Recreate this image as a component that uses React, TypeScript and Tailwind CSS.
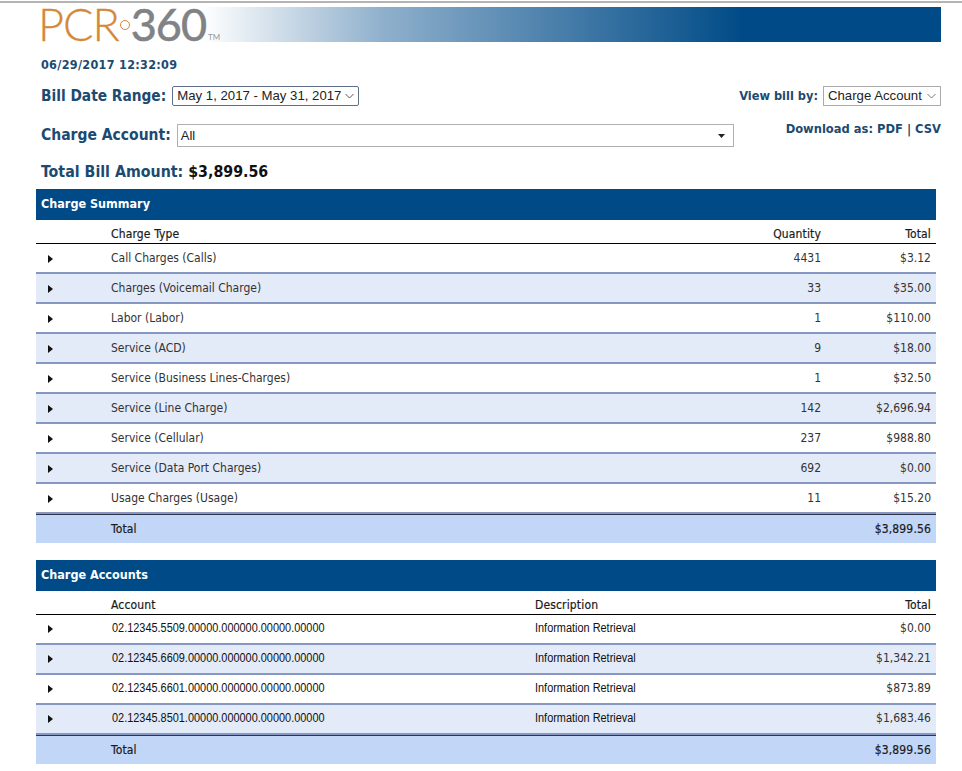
const font = "font-['DejaVu_Sans_Condensed','DejaVu_Sans',sans-serif]";
const arial = "font-['Liberation_Sans',Arial,sans-serif]";

type SummaryRow = { type: string; qty: string; total: string };
type AccountRow = { account: string; total: string };

const summary: SummaryRow[] = [
  { type: "Call Charges (Calls)", qty: "4431", total: "$3.12" },
  { type: "Charges (Voicemail Charge)", qty: "33", total: "$35.00" },
  { type: "Labor (Labor)", qty: "1", total: "$110.00" },
  { type: "Service (ACD)", qty: "9", total: "$18.00" },
  { type: "Service (Business Lines-Charges)", qty: "1", total: "$32.50" },
  { type: "Service (Line Charge)", qty: "142", total: "$2,696.94" },
  { type: "Service (Cellular)", qty: "237", total: "$988.80" },
  { type: "Service (Data Port Charges)", qty: "692", total: "$0.00" },
  { type: "Usage Charges (Usage)", qty: "11", total: "$15.20" },
];

const accounts: AccountRow[] = [
  { account: "02.12345.5509.00000.000000.00000.00000", total: "$0.00" },
  { account: "02.12345.6609.00000.000000.00000.00000", total: "$1,342.21" },
  { account: "02.12345.6601.00000.000000.00000.00000", total: "$873.89" },
  { account: "02.12345.8501.00000.000000.00000.00000", total: "$1,683.46" },
];

const summaryCols = "grid grid-cols-[75px_1fr_110px_115px] items-center";
const accountCols = "grid grid-cols-[75px_424px_1fr_115px] items-center";
const heading = "text-[#1a1a1a] tracking-[0.15px] [-webkit-text-stroke:0.2px_#1a1a1a]";

function Arrow() {
  return (
    <svg width="5" height="8" viewBox="0 0 5 8" className="ml-[12px] mt-[2px]">
      <path d="M0 0 L5 4 L0 8 Z" fill="#111" />
    </svg>
  );
}

function Chevron({ color = "#555" }: { color?: string }) {
  return (
    <svg width="9" height="6" viewBox="0 0 9 6" fill="none">
      <path d="M0.5 1 L4.5 5 L8.5 1" stroke={color} strokeWidth="1" />
    </svg>
  );
}

function SectionBar({ title }: { title: string }) {
  return (
    <div className={`h-[31px] bg-[#004b87] pl-[5px] flex items-center text-white text-[12.5px] font-bold ${font}`}>
      {title}
    </div>
  );
}

function rowBg(i: number) {
  return i % 2 === 1 ? "bg-[#e3eaf8]" : "bg-white";
}

export default function App() {
  return (
    <div className={`w-[962px] h-[771px] overflow-hidden bg-white ${font}`}>
      <div className="h-[3px] bg-white border-b-2 border-[#b4b4b4]" />

      <div className="ml-[40px] mr-[21px] mt-[4px] h-[35px] flex bg-[linear-gradient(90deg,#ffffff_18%,#8fb0cc_38%,#004b87_78%)]">
        <div className="flex items-center h-[35px] -ml-[2px] font-['Lato',sans-serif] leading-[35px]">
          <span className="text-[45px] font-light text-[#d4883a] tracking-[-1px] [-webkit-text-stroke:0.3px_#d4883a]">PCR</span>
          <span className="w-[10px] h-[10px] mx-[1px] rounded-full border-[1.5px] border-[#d4883a]" />
          <span className="text-[45px] text-[#808285] tracking-[-1px] [-webkit-text-stroke:0.6px_#808285]">360</span>
          <span className="text-[8px] leading-[10px] text-[#999] self-end ml-[2px]">TM</span>
        </div>
      </div>

      <div className="ml-[41px] mt-[15px] text-[#1c4a70] text-[12.5px] font-bold leading-[15px] tracking-[0.3px]">06/29/2017 12:32:09</div>

      <div className="ml-[41px] mr-[21px] mt-[14px] flex items-center justify-between h-[20px]">
        <div className="flex items-center">
          <span className="text-[#1c4a70] text-[15.3px] font-bold">Bill Date Range:</span>
          <div className={`ml-[6px] w-[187px] h-[20px] border border-[#5f6f8a] rounded-[2px] flex items-center justify-between pl-[4px] pr-[4px] text-[13.2px] text-[#222] whitespace-nowrap ${arial}`}>
            <span>May 1, 2017 - May 31, 2017</span>
            <Chevron />
          </div>
        </div>
        <div className="flex items-center">
          <span className="text-[#1c4a70] text-[12.7px] font-bold">View bill by:</span>
          <div className={`ml-[5px] w-[118px] h-[20px] border border-[#aaa] flex items-center justify-between pl-[4px] pr-[4px] text-[13.2px] text-[#222] whitespace-nowrap ${arial}`}>
            <span>Charge Account</span>
            <Chevron color="#777" />
          </div>
        </div>
      </div>

      <div className="ml-[41px] mr-[21px] mt-[18px] flex items-start justify-between h-[24px]">
        <div className="flex items-center">
          <span className="text-[#1c4a70] text-[15.5px] font-bold">Charge Account:</span>
          <div className={`ml-[6px] w-[557px] h-[23px] border border-[#b0b0b0] flex items-center justify-between pl-[3px] pr-[8px] text-[13px] text-[#222] ${arial}`}>
            <span className="mt-[1px]">All</span>
            <svg width="7" height="4" viewBox="0 0 7 4"><path d="M0 0 H7 L3.5 4 Z" fill="#222" /></svg>
          </div>
        </div>
        <div className="text-[#1c4a70] text-[12.8px] font-bold -mt-[5px]">Download as: PDF | CSV</div>
      </div>

      <div className="ml-[41px] mt-[12px] h-[24px] flex items-center gap-[5px] text-[15.8px] font-bold">
        <span className="text-[#1c4a70]">Total Bill Amount:</span>
        <span className="text-[#111]">$3,899.56</span>
      </div>

      <div className="ml-[36px] w-[900px] mt-[5px] text-[12px] text-[#333]">
        <SectionBar title="Charge Summary" />
        <div className={`${summaryCols} ${heading} h-[24px] border-b border-black pt-[5px]`}>
          <span />
          <span>Charge Type</span>
          <span className="text-right">Quantity</span>
          <span className="text-right pr-[5px]">Total</span>
        </div>
        {summary.map((row, i) => (
          <div key={row.type} className={`${summaryCols} h-[30px] border-b-2 border-[#8797c3] pb-[1px] ${rowBg(i)}`}>
            <Arrow />
            <span>{row.type}</span>
            <span className="text-right">{row.qty}</span>
            <span className="text-right pr-[5px]">{row.total}</span>
          </div>
        ))}
        <div className={`${summaryCols} ${heading} h-[29px] border-t border-[#333347] bg-[#c2d6f8]`}>
          <span />
          <span>Total</span>
          <span />
          <span className="text-right pr-[5px]">$3,899.56</span>
        </div>

        <div className="mt-[17px]">
          <SectionBar title="Charge Accounts" />
        </div>
        <div className={`${accountCols} ${heading} h-[24px] border-b border-black pt-[5px]`}>
          <span />
          <span>Account</span>
          <span>Description</span>
          <span className="text-right pr-[5px]">Total</span>
        </div>
        {accounts.map((row, i) => (
          <div key={row.account} className={`${accountCols} h-[30px] border-b-2 border-[#8797c3] pb-[2px] ${rowBg(i)}`}>
            <Arrow />
            <span className={`${arial} ml-[1px] text-[12px] text-[#111] whitespace-nowrap origin-left scale-x-[0.91]`}>{row.account}</span>
            <span className={`${arial} text-[12px] text-[#111] whitespace-nowrap origin-left scale-x-[0.91]`}>Information Retrieval</span>
            <span className="text-right pr-[5px]">{row.total}</span>
          </div>
        ))}
        <div className={`${accountCols} ${heading} h-[29px] border-t border-[#333347] bg-[#c2d6f8]`}>
          <span />
          <span>Total</span>
          <span />
          <span className="text-right pr-[5px]">$3,899.56</span>
        </div>
      </div>
    </div>
  );
}
